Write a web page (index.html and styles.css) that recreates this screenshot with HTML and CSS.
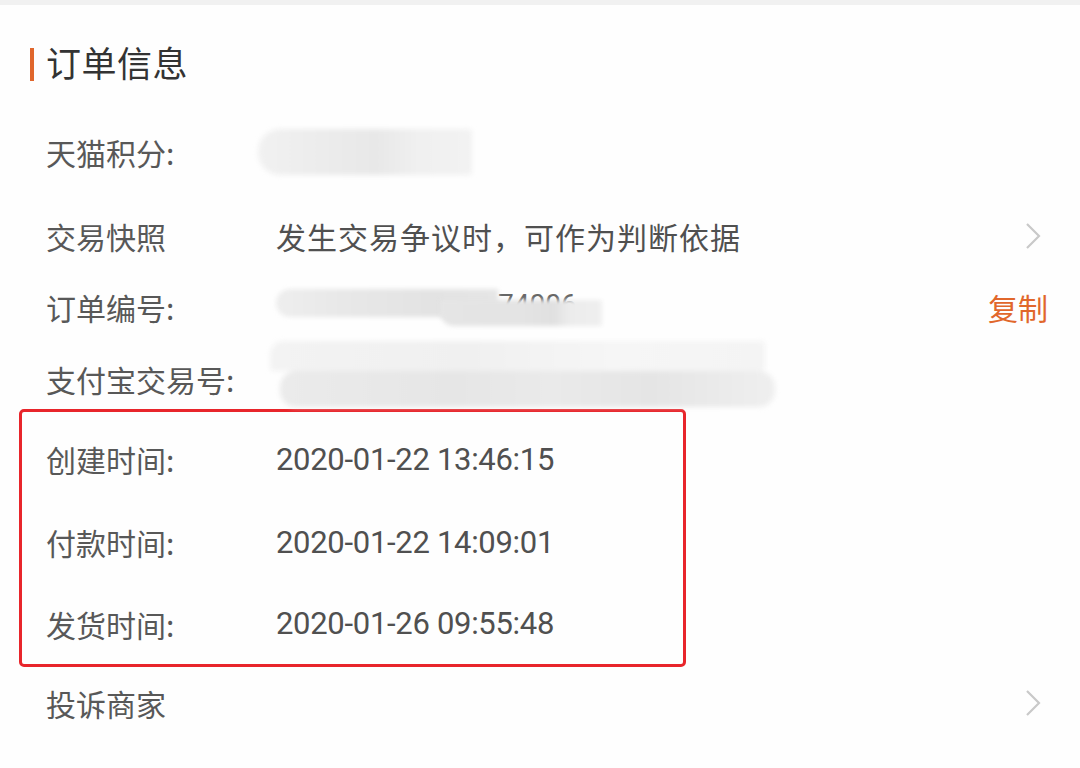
FILE: index.html
```html
<!DOCTYPE html>
<html lang="zh-CN">
<head>
<meta charset="utf-8">
<title>订单信息</title>
<link rel="stylesheet" href="styles.css">
</head>
<body>
<div class="band"></div>
<section class="card">
  <h2 class="title"><span class="bar"></span>订单信息</h2>

  <div class="row r1">
    <span class="label">天猫积分:</span>
    <span class="blur blur-points"></span>
  </div>

  <div class="row r2">
    <span class="label">交易快照</span>
    <span class="value cjk">发生交易争议时，可作为判断依据</span>
    <svg class="chev" width="16" height="28" viewBox="0 0 16 28"><path d="M2 2 L14 14 L2 26" fill="none" stroke="#c9c9c9" stroke-width="2.2"/></svg>
  </div>

  <div class="row r3">
    <span class="label">订单编号:</span>
    <span class="order-mask">
      <span class="peek">74006</span>
      <span class="seg seg-a"></span>
      <span class="seg seg-b"></span>
    </span>
    <span class="copy">复制</span>
  </div>

  <div class="row r4">
    <span class="label">支付宝交易号:</span>
    <span class="blur blur-alipay"><span class="top"></span><span class="bot"></span></span>
  </div>

  <div class="mark">
    <div class="row rt first">
      <span class="label">创建时间:</span>
      <span class="value num">2020-01-22 13:46:15</span>
    </div>
    <div class="row rt">
      <span class="label">付款时间:</span>
      <span class="value num">2020-01-22 14:09:01</span>
    </div>
    <div class="row rt last">
      <span class="label">发货时间:</span>
      <span class="value num">2020-01-26 09:55:48</span>
    </div>
  </div>

  <div class="row r8">
    <span class="label">投诉商家</span>
    <svg class="chev" width="16" height="28" viewBox="0 0 16 28"><path d="M2 2 L14 14 L2 26" fill="none" stroke="#c9c9c9" stroke-width="2.2"/></svg>
  </div>
</section>
</body>
</html>
```

FILE: styles.css
```css
* { box-sizing: border-box; }
html, body { margin: 0; padding: 0; }
body {
  width: 1080px;
  height: 768px;
  overflow: hidden;
  background: #fefefe;
  font-family: "Noto Sans CJK SC", "Noto Sans", sans-serif;
  color: #555;
}
.band { height: 5px; background: #f1f1f1; }
.card { padding: 0 32px 0 46px; }
.title {
  margin: 0;
  height: 110px;
  padding-top: 2px;
  display: flex;
  align-items: center;
  position: relative;
  font-size: 35px;
  font-weight: 400;
  color: #333;
  letter-spacing: 0.5px;
}
.bar {
  position: absolute;
  left: -16px;
  top: 43px;
  width: 4px;
  height: 33px;
  background: #e0662c;
}
.row {
  display: flex;
  align-items: center;
  font-size: 30px;
}
.label { width: 230px; flex: none; color: #585858; }
.value { color: #505050; }
.cjk { letter-spacing: 1px; }
.num {
  font-family: Roboto, "Noto Sans", sans-serif;
  font-size: 31px;
  letter-spacing: -0.3px;
  color: #505050;
}
.chev { margin-left: auto; margin-right: 7px; }
.copy { margin-left: auto; color: #e1672b; font-size: 30px; }

.r1 { height: 80px; padding-bottom: 6px; }
.r2 { height: 82px; }
.r3 { height: 60px; }
.r4 { height: 72px; padding-top: 12px; }

.mark {
  margin-left: -27px;
  width: 667px;
  height: 258px;
  border: 3px solid #e8252b;
  border-radius: 5px;
  padding: 5px 0 0 24px;
}
.rt { height: 82px; }
.rt.first { height: 84px; }
.rt.last { height: 81px; }
.r8 { height: 78px; padding-bottom: 6px; }

.blur { display: block; filter: blur(2.5px); }
.blur-points {
  margin-left: -18px;
  width: 214px;
  height: 46px;
  border-radius: 22px 4px 4px 22px;
  background: linear-gradient(90deg, #f1f1f1 0%, #ececec 30%, #e8e8e8 55%, #f0f0f0 75%, #f2f2f2 100%);
}

.order-mask {
  position: relative;
  display: block;
  width: 326px;
  height: 40px;
}
.peek {
  position: absolute;
  left: 222px;
  top: 4px;
  line-height: 28px;
  font-family: Roboto, sans-serif;
  font-size: 28px;
  color: #666;
}
.seg { position: absolute; filter: blur(2px); }
.seg-a {
  left: 0;
  top: 2px;
  width: 222px;
  height: 28px;
  border-radius: 14px 0 0 14px;
  background: linear-gradient(90deg, #eeeeee 0%, #e8e8e8 30%, #e3e3e3 70%, #e6e6e6 100%);
}
.seg-b {
  left: 164px;
  top: 13px;
  width: 162px;
  height: 26px;
  border-radius: 0 2px 2px 14px;
  background: linear-gradient(90deg, #e5e5e5 0%, #e4e4e4 50%, #e0e0e0 70%, #ececec 80%, #efefef 100%);
}

.blur-alipay {
  margin-left: -6px;
  width: 505px;
  height: 66px;
  margin-top: -10px;
  display: flex;
  flex-direction: column;
}
.blur-alipay .top {
  height: 30px;
  width: 495px;
  border-radius: 14px 4px 4px 4px;
  background: linear-gradient(90deg, #f3f3f3 0%, #f0f0f0 40%, #f6f6f6 70%, #f4f4f4 100%);
}
.blur-alipay .bot {
  height: 36px;
  margin-left: 10px;
  border-radius: 16px;
  background: linear-gradient(90deg, #ebebeb 0%, #e6e6e6 35%, #eaeaea 55%, #e5e5e5 75%, #efefef 100%);
}
```
